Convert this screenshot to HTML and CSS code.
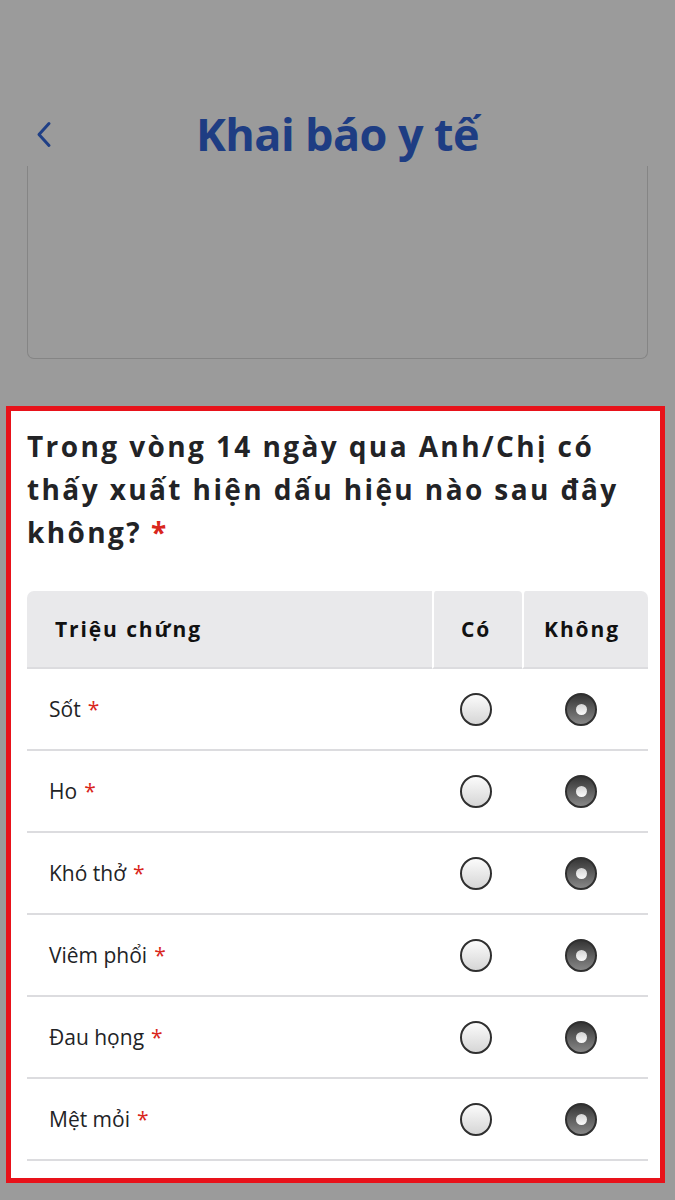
FILE: index.html
```html
<!DOCTYPE html>
<html lang="vi">
<head>
<meta charset="utf-8">
<title>Khai báo y tế</title>
<link rel="stylesheet" href="styles.css">
</head>
<body>
<div class="page">
  <header class="header">
    <span class="back">
      <svg width="16" height="28" viewBox="0 0 16 28" aria-hidden="true"><path d="M13 2.5 L3 13.5 L13 24.5" fill="none" stroke="#1f3f86" stroke-width="3" stroke-linecap="round" stroke-linejoin="round"/></svg>
    </span>
    <h1 class="title">Khai báo y tế</h1>
    <span class="spacer"></span>
  </header>
  <div class="topbox"></div>
  <section class="card">
    <p class="question">Trong vòng 14 ngày qua Anh/Chị có thấy xuất hiện dấu hiệu nào sau đây không?<span class="req">*</span></p>
    <div class="table">
      <div class="th th-first">Triệu chứng</div>
      <div class="th th-yes">Có</div>
      <div class="th th-no">Không</div>

      <div class="td label"><span>Sốt<span class="req">*</span></span></div>
      <div class="td yes"><span class="radio"></span></div>
      <div class="td no"><span class="radio checked"></span></div>

      <div class="td label"><span>Ho<span class="req">*</span></span></div>
      <div class="td yes"><span class="radio"></span></div>
      <div class="td no"><span class="radio checked"></span></div>

      <div class="td label"><span>Khó thở<span class="req">*</span></span></div>
      <div class="td yes"><span class="radio"></span></div>
      <div class="td no"><span class="radio checked"></span></div>

      <div class="td label"><span>Viêm phổi<span class="req">*</span></span></div>
      <div class="td yes"><span class="radio"></span></div>
      <div class="td no"><span class="radio checked"></span></div>

      <div class="td label"><span>Đau họng<span class="req">*</span></span></div>
      <div class="td yes"><span class="radio"></span></div>
      <div class="td no"><span class="radio checked"></span></div>

      <div class="td label"><span>Mệt mỏi<span class="req">*</span></span></div>
      <div class="td yes"><span class="radio"></span></div>
      <div class="td no"><span class="radio checked"></span></div>
    </div>
  </section>
</div>
</body>
</html>
```
FILE: styles.css
```css
html, body {
  margin: 0;
  padding: 0;
}
body {
  background: #9b9b9b;
  font-family: "Open Sans", "Noto Sans", "Liberation Sans", sans-serif;
  color: #222326;
}
.page {
  width: 675px;
  height: 1200px;
  overflow: hidden;
}
.header {
  height: 166px;
  box-sizing: border-box;
  padding-top: 104px;
  display: grid;
  grid-template-columns: 1fr auto 1fr;
  align-items: start;
}
.back {
  margin-left: 36px;
  margin-top: 17px;
  display: block;
  line-height: 0;
}
.title {
  margin: 0;
  font-size: 45px;
  line-height: 60px;
  font-weight: 700;
  color: #1e3d83;
  letter-spacing: -0.6px;
}
.topbox {
  margin: 0 27px;
  height: 193px;
  border: 1.5px solid #858585;
  border-top: none;
  border-radius: 0 0 7px 7px;
  box-sizing: border-box;
}
.card {
  margin: 47px 0 0 6px;
  width: 659px;
  height: 777px;
  box-sizing: border-box;
  border: 5px solid #e8121a;
  background: #fff;
  padding: 14px 12px 0 16px;
}
.question {
  margin: 0;
  font-size: 28px;
  line-height: 43px;
  font-weight: 700;
  letter-spacing: 2.4px;
  color: #222326;
}
.req {
  color: #d9261c;
  font-weight: 400;
}
.question .req {
  font-weight: 700;
  margin-left: 9px;
}
.table {
  margin-top: 37px;
  display: grid;
  grid-template-columns: 405px 90px 126px;
}
.th {
  background: #e9e9eb;
  height: 78px;
  box-sizing: border-box;
  border-bottom: 2px solid #dcdcdf;
  display: flex;
  align-items: center;
  font-size: 21px;
  font-weight: 700;
  letter-spacing: 1.9px;
  color: #111;
}
.th-first {
  padding-left: 28px;
  border-top-left-radius: 7px;
}
.th-yes {
  justify-content: center;
  padding-right: 4px;
  border-left: 2px solid #fff;
  border-radius: 4px 4px 0 0;
}
.th-no {
  justify-content: center;
  padding-right: 8px;
  border-left: 2px solid #fff;
  border-radius: 4px 7px 0 0;
}
.td {
  height: 82px;
  box-sizing: border-box;
  border-bottom: 2px solid #dcdcdf;
  display: flex;
  align-items: center;
}
.label {
  padding-left: 22px;
  font-size: 21px;
  color: #222326;
}
.label .req {
  margin-left: 7px;
}
.yes {
  justify-content: center;
  padding-left: 2px;
  padding-right: 4px;
}
.no {
  justify-content: center;
  padding-left: 2px;
  padding-right: 10px;
}
.radio {
  display: block;
  width: 32px;
  height: 33px;
  box-sizing: border-box;
  border-radius: 50%;
  border: 2px solid #2f2f2f;
  background: linear-gradient(#fbfbfb, #d6d6d6);
  position: relative;
}
.radio.checked {
  background: linear-gradient(#363636, #878787);
}
.radio.checked::after {
  content: "";
  position: absolute;
  left: 8.5px;
  top: 9px;
  width: 11px;
  height: 11px;
  border-radius: 50%;
  background: linear-gradient(#d4d4d4, #fafafa);
}
```
